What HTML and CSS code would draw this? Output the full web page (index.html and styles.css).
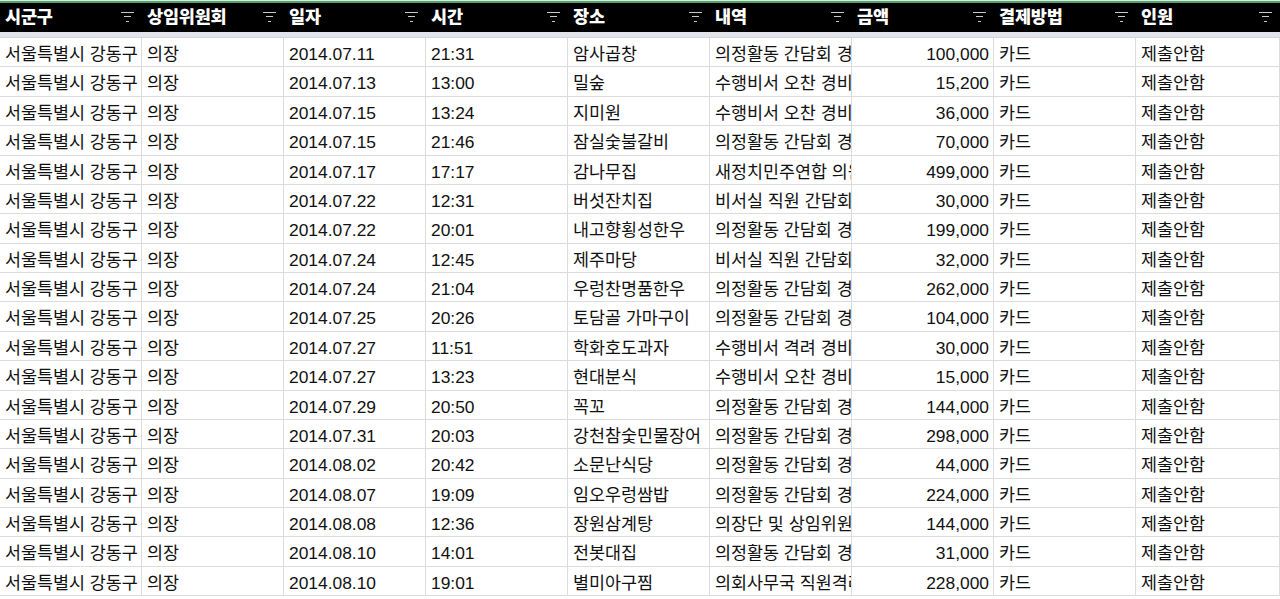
FILE: index.html
```html
<!DOCTYPE html>
<html lang="ko">
<head>
<meta charset="utf-8">
<title>업무추진비</title>
<link rel="stylesheet" href="styles.css">
</head>
<body>
<div class="sheet">
  <div class="topline"></div>
  <div class="header">
    <div class="hcell"><span>시군구</span><i class="filter"></i></div>
    <div class="hcell"><span>상임위원회</span><i class="filter"></i></div>
    <div class="hcell"><span>일자</span><i class="filter"></i></div>
    <div class="hcell"><span>시간</span><i class="filter"></i></div>
    <div class="hcell"><span>장소</span><i class="filter"></i></div>
    <div class="hcell"><span>내역</span><i class="filter"></i></div>
    <div class="hcell"><span>금액</span><i class="filter"></i></div>
    <div class="hcell"><span>결제방법</span><i class="filter"></i></div>
    <div class="hcell"><span>인원</span><i class="filter"></i></div>
  </div>
  <div class="strip"></div>
  <div class="rows" id="rows"></div>
</div>
<script src="app.js"></script>
</body>
</html>
```
FILE: app.js
```js
const data = [
  ["2014.07.11","21:31","암사곱창","의정활동 간담회 경비","100,000"],
  ["2014.07.13","13:00","밀숲","수행비서 오찬 경비","15,200"],
  ["2014.07.15","13:24","지미원","수행비서 오찬 경비","36,000"],
  ["2014.07.15","21:46","잠실숯불갈비","의정활동 간담회 경비","70,000"],
  ["2014.07.17","17:17","감나무집","새정치민주연합 의원","499,000"],
  ["2014.07.22","12:31","버섯잔치집","비서실 직원 간담회","30,000"],
  ["2014.07.22","20:01","내고향횡성한우","의정활동 간담회 경비","199,000"],
  ["2014.07.24","12:45","제주마당","비서실 직원 간담회","32,000"],
  ["2014.07.24","21:04","우렁찬명품한우","의정활동 간담회 경비","262,000"],
  ["2014.07.25","20:26","토담골 가마구이","의정활동 간담회 경비","104,000"],
  ["2014.07.27","11:51","학화호도과자","수행비서 격려 경비","30,000"],
  ["2014.07.27","13:23","현대분식","수행비서 오찬 경비","15,000"],
  ["2014.07.29","20:50","꼭꼬","의정활동 간담회 경비","144,000"],
  ["2014.07.31","20:03","강천참숯민물장어","의정활동 간담회 경비","298,000"],
  ["2014.08.02","20:42","소문난식당","의정활동 간담회 경비","44,000"],
  ["2014.08.07","19:09","임오우렁쌈밥","의정활동 간담회 경비","224,000"],
  ["2014.08.08","12:36","장원삼계탕","의장단 및 상임위원장","144,000"],
  ["2014.08.10","14:01","전봇대집","의정활동 간담회 경비","31,000"],
  ["2014.08.10","19:01","별미아구찜","의회사무국 직원격려","228,000"]
];
const rows = document.getElementById("rows");
for (const d of data) {
  const r = document.createElement("div");
  r.className = "row";
  const cells = ["서울특별시 강동구","의장",d[0],d[1],d[2],d[3],d[4],"카드","제출안함"];
  cells.forEach((t, i) => {
    const c = document.createElement("div");
    c.className = "cell" + (i === 6 ? " num" : "");
    c.textContent = t;
    r.appendChild(c);
  });
  rows.appendChild(r);
}
```
FILE: styles.css
```css
html, body {
  margin: 0;
  padding: 0;
  background: #ffffff;
}
body {
  font-family: "Liberation Sans", "Noto Sans CJK KR", sans-serif;
  color: #111;
  overflow: hidden;
}
.sheet {
  width: 1280px;
}
.topline {
  height: 1px;
  background: #e4e4e4;
  border-bottom: 2px solid #4fa56b;
}
.header {
  display: grid;
  grid-template-columns: repeat(8, 142px) 144px;
  height: 29px;
  background: #000;
}
.hcell {
  display: flex;
  align-items: center;
  justify-content: space-between;
  padding: 0 6px 0 5px;
  color: #fff;
  font-weight: 900;
  font-size: 17.5px;
}
.hcell span {
  line-height: 29px;
  letter-spacing: -0.2px;
}
.filter {
  position: relative;
  width: 13px;
  height: 11px;
  margin-right: 2px;
  margin-top: -1px;
  background:
    linear-gradient(#c8c8c8, #c8c8c8) 0 0 / 13px 1px no-repeat,
    linear-gradient(#c8c8c8, #c8c8c8) 3px 4px / 7px 1px no-repeat,
    linear-gradient(#c8c8c8, #c8c8c8) 5px 9px / 3px 1px no-repeat;
}
.strip {
  height: 5px;
  background: #e1e4ea;
  border-bottom: 1px solid #d4d4d4;
}
.row {
  display: grid;
  grid-template-columns: repeat(8, 142px) 144px;
  height: 29.39px;
  box-sizing: border-box;
  border-bottom: 1px solid #dcdcdc;
}
.cell {
  box-sizing: border-box;
  border-right: 1px solid #dcdcdc;
  padding: 1px 4px 0 5px;
  font-size: 17.4px;
  line-height: 30px;
  white-space: nowrap;
  overflow: hidden;
}
.cell.num {
  text-align: right;
  padding-right: 4px;
}
```
